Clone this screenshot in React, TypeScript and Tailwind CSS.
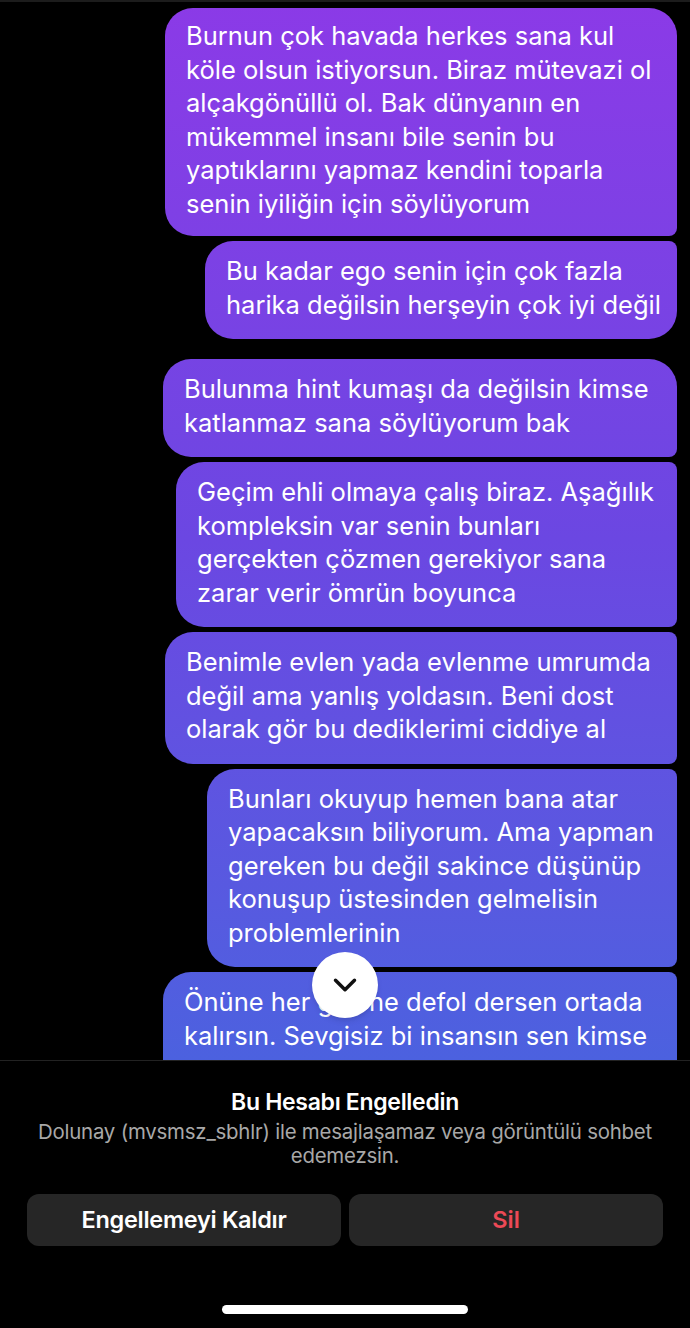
import { ChevronDown } from "lucide-react"

type Msg = { lines: string[]; w: string; shape: string }

const messages: Msg[] = [
    {
        lines: [
            "Burnun çok havada herkes sana kul",
            "köle olsun istiyorsun. Biraz mütevazi ol",
            "alçakgönüllü ol. Bak dünyanın en",
            "mükemmel insanı bile senin bu",
            "yaptıklarını yapmaz kendini toparla",
            "senin iyiliğin için söylüyorum",
        ],
        w: "w-[512px] pt-[11px] pb-[16px]",
        shape: "rounded-[28px] rounded-br-[8px]",
    },
    {
        lines: ["Bu kadar ego senin için çok fazla", "harika değilsin herşeyin çok iyi değil"],
        w: "w-[472px] pt-[13px] pb-[18px]",
        shape: "rounded-[28px] rounded-tr-[8px]",
    },
    {
        lines: ["Bulunma hint kumaşı da değilsin kimse", "katlanmaz sana söylüyorum bak"],
        w: "w-[514px] mt-[15px] pt-[13px] pb-[18px]",
        shape: "rounded-[28px] rounded-br-[8px]",
    },
    {
        lines: [
            "Geçim ehli olmaya çalış biraz. Aşağılık",
            "kompleksin var senin bunları",
            "gerçekten çözmen gerekiyor sana",
            "zarar verir ömrün boyunca",
        ],
        w: "w-[501px] pt-[13px] pb-[18px]",
        shape: "rounded-[28px] rounded-r-[8px]",
    },
    {
        lines: [
            "Benimle evlen yada evlenme umrumda",
            "değil ama yanlış yoldasın. Beni dost",
            "olarak gör bu dediklerimi ciddiye al",
        ],
        w: "w-[512px] pt-[13px] pb-[18px]",
        shape: "rounded-[28px] rounded-r-[8px]",
    },
    {
        lines: [
            "Bunları okuyup hemen bana atar",
            "yapacaksın biliyorum. Ama yapman",
            "gereken bu değil sakince düşünüp",
            "konuşup üstesinden gelmelisin",
            "problemlerinin",
        ],
        w: "w-[470px] pt-[13px] pb-[18px]",
        shape: "rounded-[28px] rounded-r-[8px]",
    },
    {
        lines: ["Önüne her gelene defol dersen ortada", "kalırsın. Sevgisiz bi insansın sen kimse"],
        w: "w-[514px] pt-[13px] pb-[40px]",
        shape: "rounded-[28px] rounded-tr-[8px]",
    },
]

function Bubble({ m }: { m: Msg }) {
    return (
        <div
            className={`${m.w} ${m.shape} bg-linear-to-b from-[#8b3ae7] via-[#6b47e2] to-[#4a62df] bg-fixed bg-[length:100%_1080px] px-[21px] text-white text-[25.5px] leading-[33.5px] whitespace-nowrap`}
        >
            {m.lines.map((l, i) => (
                <div key={i}>{l}</div>
            ))}
        </div>
    )
}

export default function App() {
    return (
        <div className="w-[690px] h-[1328px] bg-black overflow-hidden font-['Inter','Liberation_Sans',sans-serif] relative">
            <div className="h-[1060px] overflow-hidden border-t-2 border-[#1c1c1c] flex flex-col items-end gap-[5px] pt-[6px] pr-[13px] relative">
                {messages.map((m, i) => (
                    <Bubble key={i} m={m} />
                ))}
            </div>

            <button className="absolute left-[312px] top-[952px] w-[66px] h-[66px] rounded-full bg-white flex items-center justify-center shadow-md">
                <ChevronDown size={38} strokeWidth={2.2} color="#111" />
            </button>

            <div className="border-t border-[#222] flex flex-col items-center pt-[26px]">
                <h2 className="text-white text-[23px] font-semibold leading-[30px] tracking-[-0.3px]">Bu Hesabı Engelledin</h2>
                <p className="text-[#a8a8a8] text-[20.4px] leading-[24px] text-center px-[24px] mt-[3px] tracking-[-0.2px]">
                    Dolunay (mvsmsz_sbhlr) ile mesajlaşamaz veya görüntülü sohbet edemezsin.
                </p>
                <div className="w-full px-[27px] grid grid-cols-2 gap-[8px] mt-[26px]">
                    <button className="h-[52px] rounded-[12px] bg-[#262626] text-white text-[23.5px] font-semibold tracking-[-0.3px]">
                        Engellemeyi Kaldır
                    </button>
                    <button className="h-[52px] rounded-[12px] bg-[#262626] text-[#ed4956] text-[23.5px] font-semibold">
                        Sil
                    </button>
                </div>
                <div className="mt-[59px] w-[246px] h-[9px] rounded-full bg-white" />
            </div>
        </div>
    )
}
